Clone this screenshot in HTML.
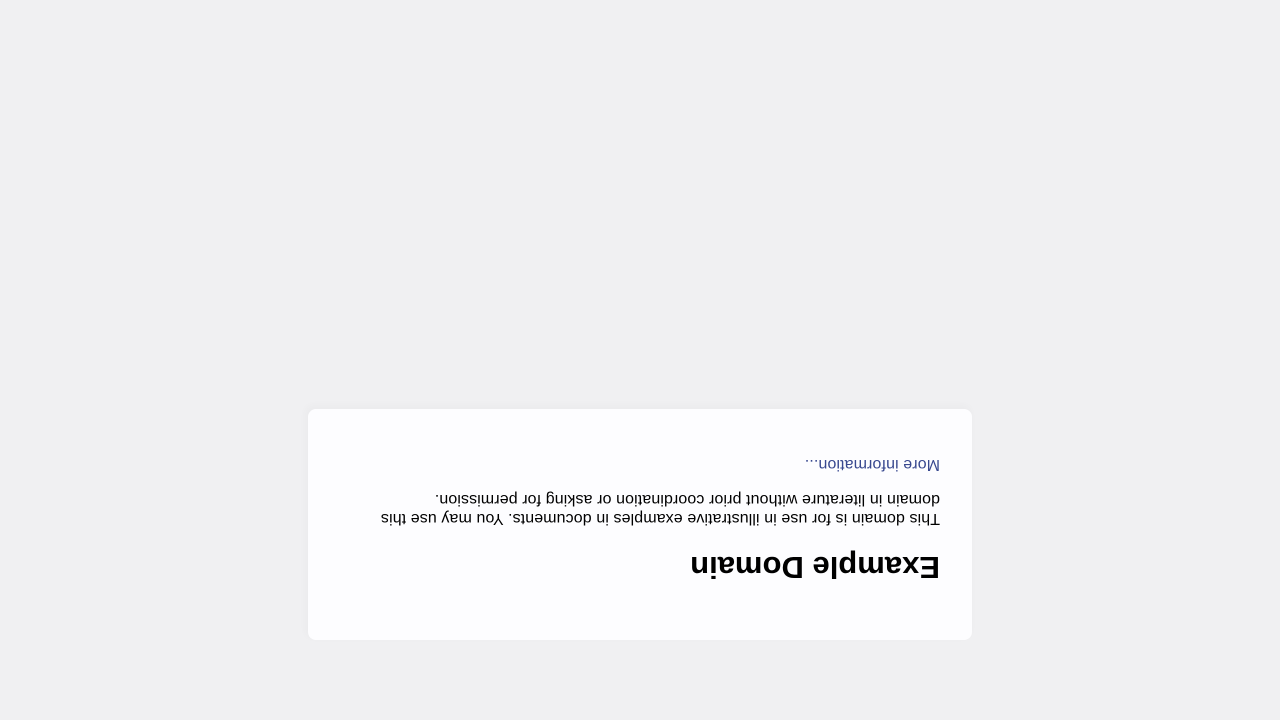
<!DOCTYPE html>
<html><head><meta charset="utf-8"><style>
html,body{margin:0;padding:0;width:1280px;height:720px;overflow:hidden;background:#f0f0f2;}
#wrap{position:absolute;left:0;top:0;width:1280px;height:720px;transform:rotate(180deg);font-family:"Liberation Sans",Arial,sans-serif;}
.card{position:absolute;left:308px;top:80px;width:600px;padding:32px;background:#fdfdff;border-radius:8px;box-shadow:2px 3px 7px 2px rgba(0,0,0,0.02);}
h1{font-size:31px;margin:23px 0 21px;line-height:36px;color:#000;}
p{font-size:16px;line-height:19px;margin:16px 0;color:#000;letter-spacing:0.1px;}
p.last{margin-bottom:14px;}
a{color:#38488f;text-decoration:none;}
</style></head><body><div id="wrap"><div class="card">
<h1>Example Domain</h1>
<p>This domain is for use in illustrative examples in documents. You may use this domain in literature without prior coordination or asking for permission.</p>
<p class="last"><a>More information...</a></p>
</div></div></body></html>
